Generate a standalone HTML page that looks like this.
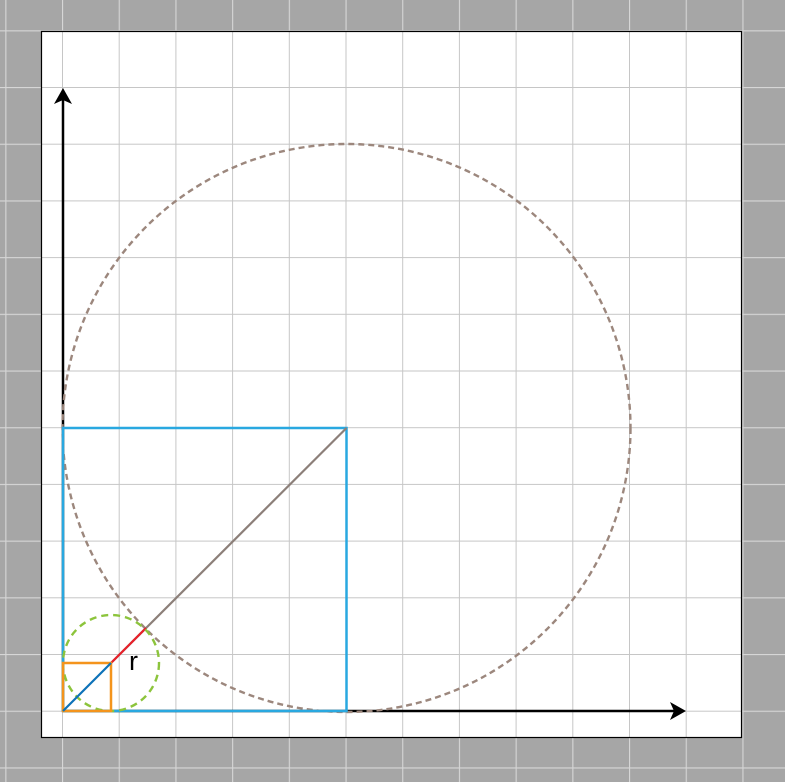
<!DOCTYPE html>
<html><head><style>html,body{margin:0;padding:0;background:#a6a6a6;}svg{display:block}</style></head><body>
<svg width="785" height="782" viewBox="0 0 785 782" xmlns="http://www.w3.org/2000/svg">
<defs>
<pattern id="g" x="5.3" y="30.3" width="56.7" height="56.7" patternUnits="userSpaceOnUse">
<path d="M0.5 0V56.7M0 0.5H56.7" stroke="#d6d6d6" stroke-width="1.2" fill="none"/>
</pattern>
<pattern id="g2" x="5.3" y="30.3" width="56.7" height="56.7" patternUnits="userSpaceOnUse">
<path d="M0.5 0V56.7M0 0.5H56.7" stroke="#c6c6c6" stroke-width="1" fill="none"/>
</pattern>
</defs>
<rect width="785" height="782" fill="#a6a6a6"/>
<rect width="785" height="782" fill="url(#g)"/>
<rect x="41.5" y="31.5" width="700" height="706" fill="#fff"/>
<rect x="41.5" y="31.5" width="700" height="706" fill="url(#g2)"/>
<rect x="41.5" y="31.5" width="700" height="706" fill="none" stroke="#000" stroke-width="1.2"/>
<line x1="63" y1="711" x2="676" y2="711" stroke="#000" stroke-width="2.5"/>
<path d="M686 711L670 702L674 711L670 720Z" fill="#000"/>
<line x1="63" y1="711" x2="63" y2="98" stroke="#000" stroke-width="2.5"/>
<path d="M63 88L54 104L63 100L72 104Z" fill="#000"/>
<circle cx="346.5" cy="428" r="284" fill="none" stroke="#9c877d" stroke-width="2.4" stroke-dasharray="6 4"/>
<rect x="63" y="428" width="283.5" height="283" fill="none" stroke="#29a8e0" stroke-width="2.5"/>
<line x1="111" y1="663" x2="346.5" y2="428" stroke="#8c7f79" stroke-width="2.2"/>
<line x1="111" y1="663" x2="146" y2="628" stroke="#e8202a" stroke-width="2.2"/>
<circle cx="111" cy="663" r="48" fill="none" stroke="#8cc43c" stroke-width="2.4" stroke-dasharray="7 5"/>
<rect x="63" y="663" width="48" height="48" fill="none" stroke="#f4941c" stroke-width="2.5"/>
<line x1="63" y1="711" x2="111" y2="663" stroke="#0d72b8" stroke-width="2.2"/>
<text x="129" y="670" font-family="Liberation Sans, sans-serif" font-size="27" fill="#000">r</text>
</svg>
</body></html>
